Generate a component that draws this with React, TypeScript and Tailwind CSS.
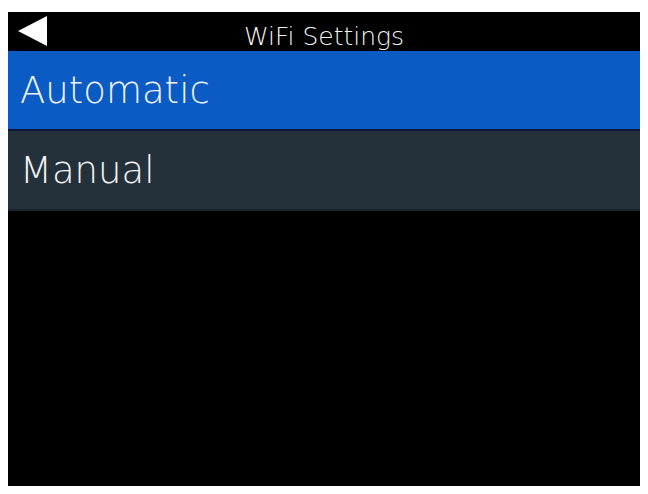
import React from 'react';

const items = [
  { label: 'Automatic', selected: true },
  { label: 'Manual', selected: false },
];

export default function App() {
  return (
    <div className="w-[648px] h-[494px] bg-white pt-[12px] pl-[8px]" style={{ fontFamily: '"DejaVu Sans", sans-serif' }}>
      <div className="w-[632px] h-[474px] bg-black flex flex-col">
        {/* Header */}
        <div className="relative h-[39px] flex justify-center text-[25px] leading-none font-extralight text-gray-100 pt-[12px]">
          <svg className="absolute left-[10px] top-[4px]" width="30" height="30" viewBox="0 0 30 30">
            <polygon points="0,15 29,0 29,30" fill="#ffffff" />
          </svg>
          <span>WiFi Settings</span>
        </div>

        {/* Menu */}
        {items.map((item) => (
          <div
            key={item.label}
            className={`h-[80px] pl-[12px] pt-[21px] text-[37px] leading-none font-extralight text-gray-100 border-b-2 ${
              item.selected ? 'bg-[#0a5cc4] border-[#0b1a3a]' : 'bg-[#24313a] border-[#1a242b]'
            }`}
          >
            {item.label}
          </div>
        ))}
      </div>
    </div>
  );
}
